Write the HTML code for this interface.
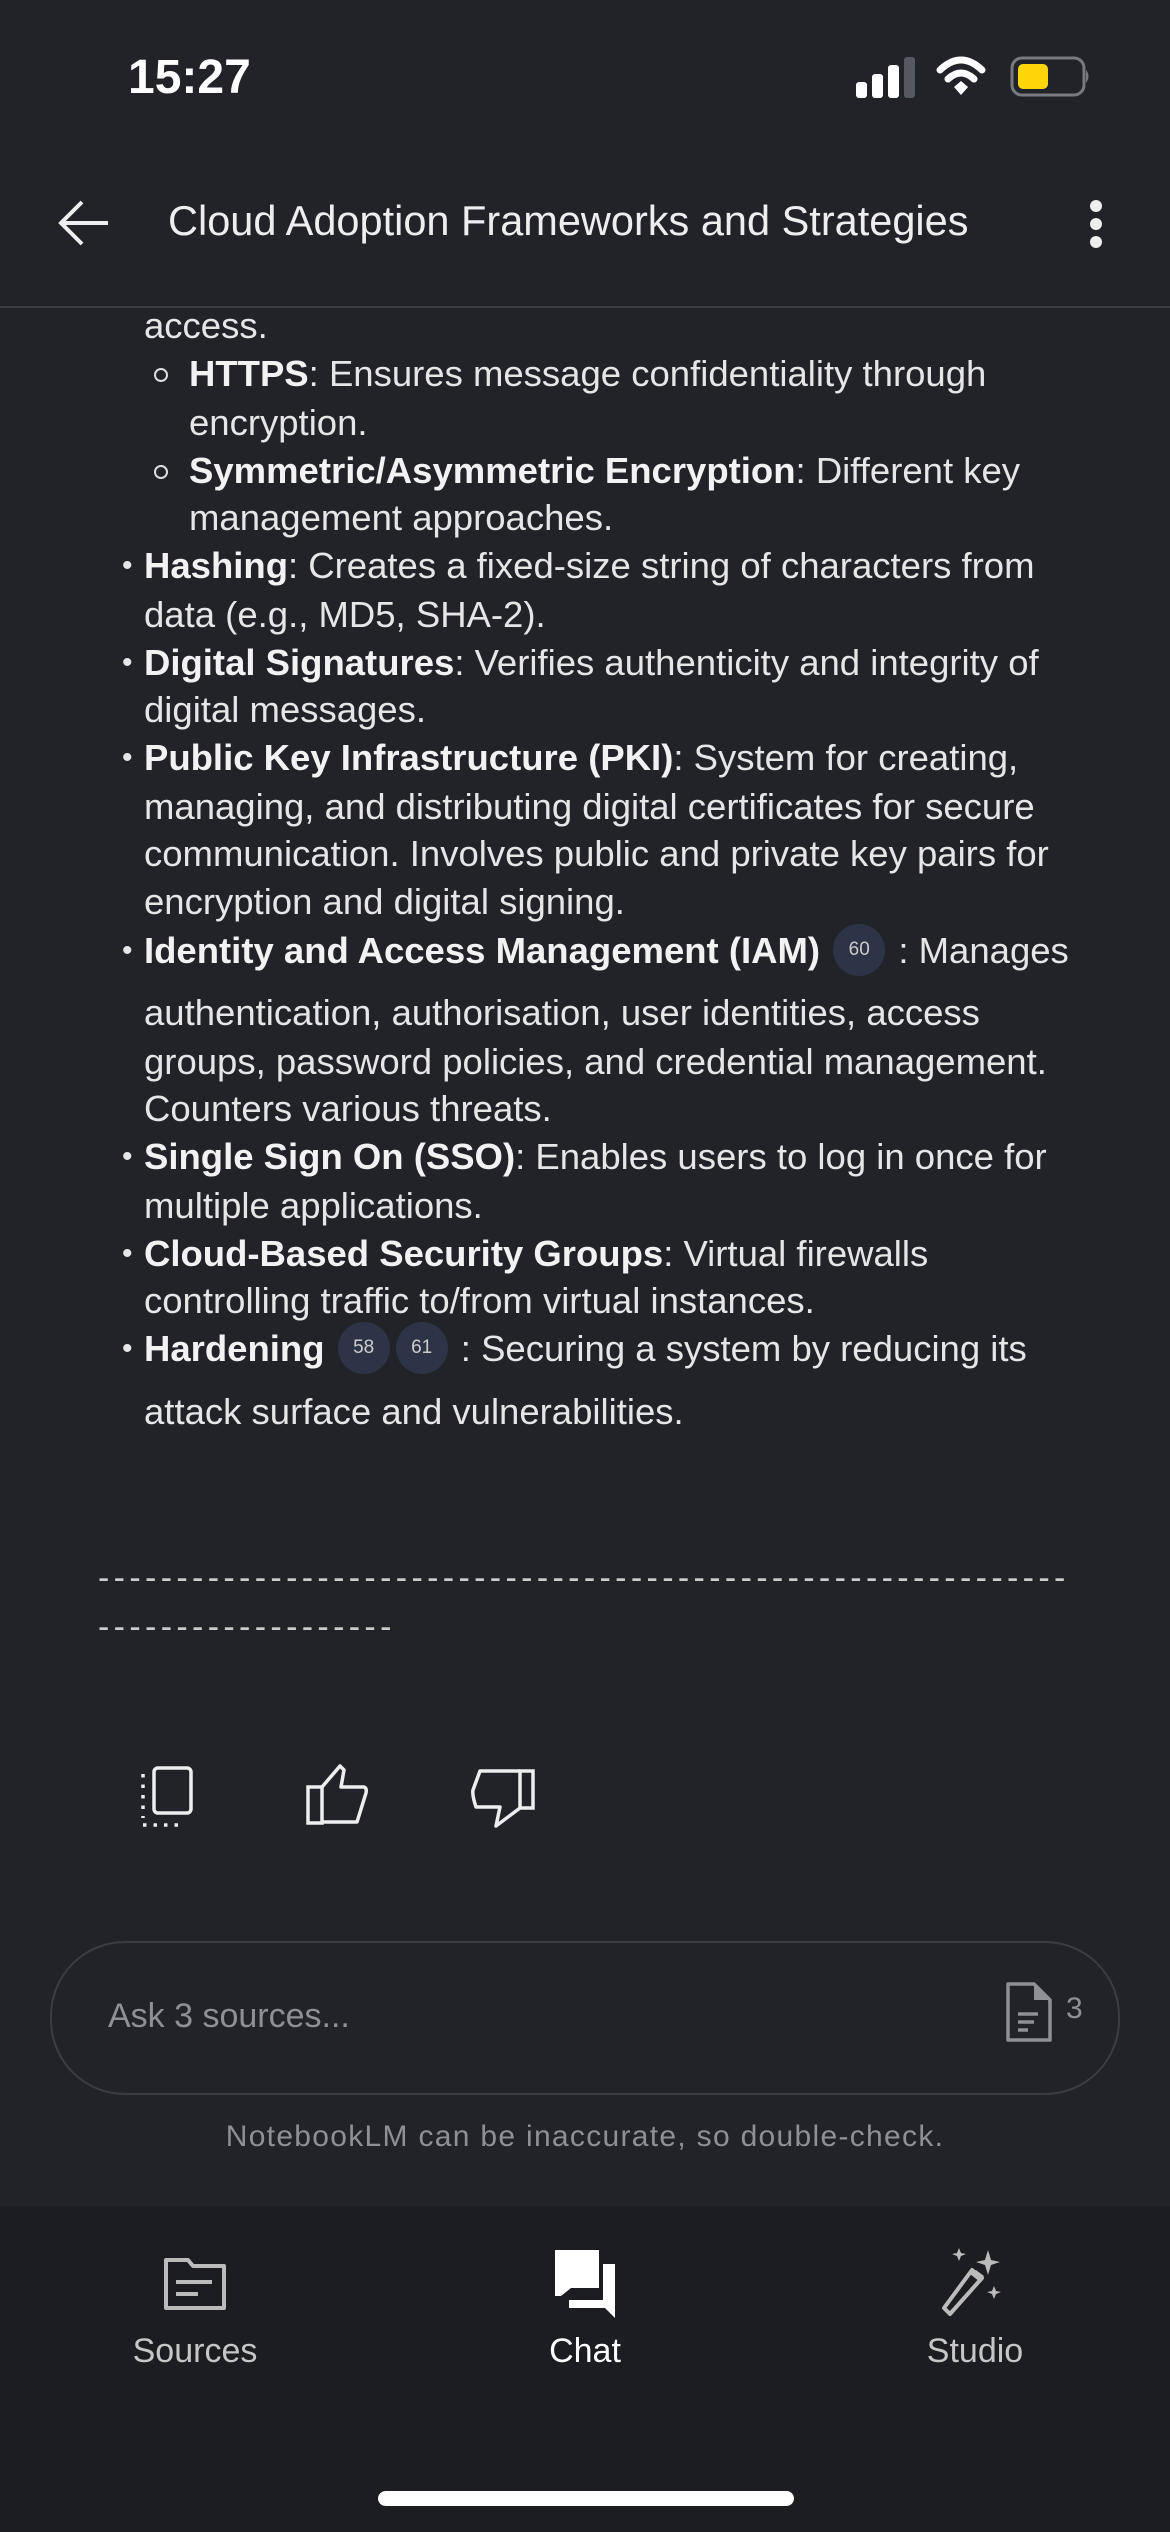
<!DOCTYPE html>
<html><head><meta charset="utf-8"><style>
*{margin:0;padding:0;box-sizing:border-box}
body{width:1170px;height:2532px;background:#212328;position:relative;overflow:hidden;font-family:"Liberation Sans",sans-serif;color:#e6e6e6}
.l{position:absolute;white-space:nowrap;font-size:36.5px;line-height:48px;height:48px}
.l b{font-weight:bold;color:#f2f2f2}
.bul{position:absolute;left:122px;font-size:30px}
.sub{position:absolute;left:154px;width:14px;height:14px;border:2px solid #ddd;border-radius:50%}
.badge{display:inline-block;width:52px;height:52px;border-radius:50%;background:#2e3447;color:#ccc;font-size:19px;line-height:52px;text-align:center;vertical-align:middle;margin:0 3px;position:relative;top:-3px}
</style></head><body>
<div style="position:absolute;left:128px;top:50px;font-size:48px;font-weight:bold;color:#fff">15:27</div>
<svg style="position:absolute;left:850px;top:52px" width="240" height="52" viewBox="0 0 240 52">
<rect x="6" y="30" width="11" height="16" rx="3" fill="#fff"/>
<rect x="22" y="22" width="11" height="24" rx="3" fill="#fff"/>
<rect x="38" y="13" width="11" height="33" rx="3" fill="#fff"/>
<rect x="54" y="5" width="11" height="41" rx="3" fill="#545860"/>
<path d="M90 18 Q111 -2 132 18" stroke="#fff" stroke-width="7" fill="none" stroke-linecap="round"/>
<path d="M98 27 Q111 15 124 27" stroke="#fff" stroke-width="7" fill="none" stroke-linecap="round"/>
<path d="M104 35 L111 29 L118 35 L111 43Z" fill="#fff"/>
<rect x="162" y="6" width="72" height="37" rx="10" fill="none" stroke="#777a80" stroke-width="3"/>
<rect x="168" y="12" width="30" height="25" rx="5" fill="#ffd60a"/>
<path d="M236 18 Q241 24 236 31Z" fill="#777a80"/>
</svg>
<svg style="position:absolute;left:56px;top:198px" width="56" height="50" viewBox="0 0 56 50"><path d="M52 25H6M26 4L5 25L26 46" stroke="#eee" stroke-width="4" fill="none"/></svg>
<div style="position:absolute;left:168px;top:197px;font-size:41.5px;color:#eee;white-space:nowrap">Cloud Adoption Frameworks and Strategies</div>
<div style="position:absolute;left:1090px;top:200px;width:12px;height:12px;border-radius:50%;background:#eee;box-shadow:0 18px 0 #eee,0 36px 0 #eee"></div>
<div style="position:absolute;left:0;top:306px;width:1170px;height:2px;background:#3a3d42"></div>

<div class="l" style="left:144px;top:302px">access.</div>
<div class="sub" style="top:368px"></div><div class="l" style="left:189px;top:350px"><b>HTTPS</b>: Ensures message confidentiality through</div>
<div class="l" style="left:189px;top:399px">encryption.</div>
<div class="sub" style="top:465px"></div><div class="l" style="left:189px;top:447px"><b>Symmetric/Asymmetric Encryption</b>: Different key</div>
<div class="l" style="left:189px;top:494px">management approaches.</div>
<div class="l bul" style="top:542px">•</div><div class="l" style="left:144px;top:542px"><b>Hashing</b>: Creates a fixed-size string of characters from</div>
<div class="l" style="left:144px;top:591px">data (e.g., MD5, SHA-2).</div>
<div class="l bul" style="top:639px">•</div><div class="l" style="left:144px;top:639px"><b>Digital Signatures</b>: Verifies authenticity and integrity of</div>
<div class="l" style="left:144px;top:686px">digital messages.</div>
<div class="l bul" style="top:734px">•</div><div class="l" style="left:144px;top:734px"><b>Public Key Infrastructure (PKI)</b>: System for creating,</div>
<div class="l" style="left:144px;top:783px">managing, and distributing digital certificates for secure</div>
<div class="l" style="left:144px;top:830px">communication. Involves public and private key pairs for</div>
<div class="l" style="left:144px;top:878px">encryption and digital signing.</div>
<div class="l bul" style="top:927px">•</div><div class="l" style="left:144px;top:927px"><b>Identity and Access Management (IAM)</b> <span class="badge">60</span> : Manages</div>
<div class="l" style="left:144px;top:989px">authentication, authorisation, user identities, access</div>
<div class="l" style="left:144px;top:1038px">groups, password policies, and credential management.</div>
<div class="l" style="left:144px;top:1085px">Counters various threats.</div>
<div class="l bul" style="top:1133px">•</div><div class="l" style="left:144px;top:1133px"><b>Single Sign On (SSO)</b>: Enables users to log in once for</div>
<div class="l" style="left:144px;top:1182px">multiple applications.</div>
<div class="l bul" style="top:1230px">•</div><div class="l" style="left:144px;top:1230px"><b>Cloud-Based Security Groups</b>: Virtual firewalls</div>
<div class="l" style="left:144px;top:1277px">controlling traffic to/from virtual instances.</div>
<div class="l bul" style="top:1325px">•</div><div class="l" style="left:144px;top:1325px"><b>Hardening</b> <span class="badge">58</span><span class="badge">61</span> : Securing a system by reducing its</div>
<div class="l" style="left:144px;top:1388px">attack surface and vulnerabilities.</div>

<div class="l" style="left:98px;top:1554px;font-size:34px;color:#ccc;letter-spacing:4.35px">--------------------------------------------------------------</div>
<div class="l" style="left:98px;top:1603px;font-size:34px;color:#ccc;letter-spacing:4.35px">-------------------</div>

<svg style="position:absolute;left:0;top:1740px" width="600" height="100" viewBox="0 0 600 100">
<rect x="154" y="28" width="37" height="45" rx="4" fill="none" stroke="#eee" stroke-width="3.5"/>
<path d="M143 34V78M143 85H182" stroke="#eee" stroke-width="3.5" stroke-dasharray="3.5 7" fill="none"/>
<path d="M308 47H322V83H308Z" fill="none" stroke="#eee" stroke-width="3.5"/>
<path d="M322 47L340 26L344 30L341 47H364Q367 48 366 53L357 82H322" stroke="#eee" stroke-width="3.5" fill="none" stroke-linejoin="round"/>
<path d="M520 31H533V68H520Z" fill="none" stroke="#eee" stroke-width="3.5"/>
<path d="M520 31H480L473 50Q472 55 476 67H500L496 86L520 68" stroke="#eee" stroke-width="3.5" fill="none" stroke-linejoin="round"/>
</svg>

<div style="position:absolute;left:50px;top:1941px;width:1070px;height:154px;border:2px solid #3a3d42;border-radius:75px"></div>
<div style="position:absolute;left:108px;top:1997px;font-size:34px;color:#8e9096">Ask 3 sources...</div>
<svg style="position:absolute;left:1004px;top:1980px" width="50" height="64" viewBox="0 0 50 64"><path d="M4 4H30L46 20V60H4Z" fill="none" stroke="#8e9096" stroke-width="3.5" stroke-linejoin="round"/><path d="M30 4V20H46" fill="#8e9096"/><path d="M14 34H34M14 42H30M14 50H24" stroke="#8e9096" stroke-width="3.5"/></svg>
<div style="position:absolute;left:1066px;top:1992px;font-size:30px;color:#8e9096">3</div>
<div style="position:absolute;left:0;width:1170px;top:2120px;text-align:center;font-size:30px;letter-spacing:1.3px;color:#8e9096">NotebookLM can be inaccurate, so double-check.</div>

<div style="position:absolute;left:0;top:2206px;width:1170px;height:326px;background:#1b1d21"></div>
<svg style="position:absolute;left:162px;top:2256px" width="66" height="56" viewBox="0 0 66 56"><path d="M4 4H26L31 10H62V52H4Z" fill="none" stroke="#bbb" stroke-width="4" stroke-linejoin="round"/><path d="M14 26H50M14 38H36" stroke="#bbb" stroke-width="4"/></svg>
<svg style="position:absolute;left:553px;top:2248px" width="64" height="70" viewBox="0 0 64 70"><path d="M2 2H46V40H18L8 48H2Z" fill="#fff"/><path d="M50 16H62V70L52 60H16V52H50Z" fill="#fff"/></svg>
<svg style="position:absolute;left:940px;top:2248px" width="66" height="72" viewBox="0 0 66 72"><path d="M10 66L4 60L32 22L42 30Z" fill="none" stroke="#bbb" stroke-width="4" stroke-linejoin="round"/><path d="M30 26L40 34L44 28L36 22Z" fill="#bbb"/><path d="M48 2L51 12L60 14L51 17L48 27L45 17L36 14L45 12Z" fill="#bbb"/><path d="M19 0L21 5L26 6L21 8L19 13L17 8L12 6L17 5Z" fill="#bbb"/><path d="M54 38L56 43L61 44L56 46L54 51L52 46L47 44L52 43Z" fill="#bbb"/></svg>
<div style="position:absolute;left:95px;width:200px;top:2332px;text-align:center;font-size:34px;color:#c6c6c6">Sources</div>
<div style="position:absolute;left:485px;width:200px;top:2332px;text-align:center;font-size:34px;color:#fff">Chat</div>
<div style="position:absolute;left:875px;width:200px;top:2332px;text-align:center;font-size:34px;color:#c6c6c6">Studio</div>
<div style="position:absolute;left:378px;top:2491px;width:416px;height:15px;border-radius:8px;background:#fff"></div>
</body></html>
